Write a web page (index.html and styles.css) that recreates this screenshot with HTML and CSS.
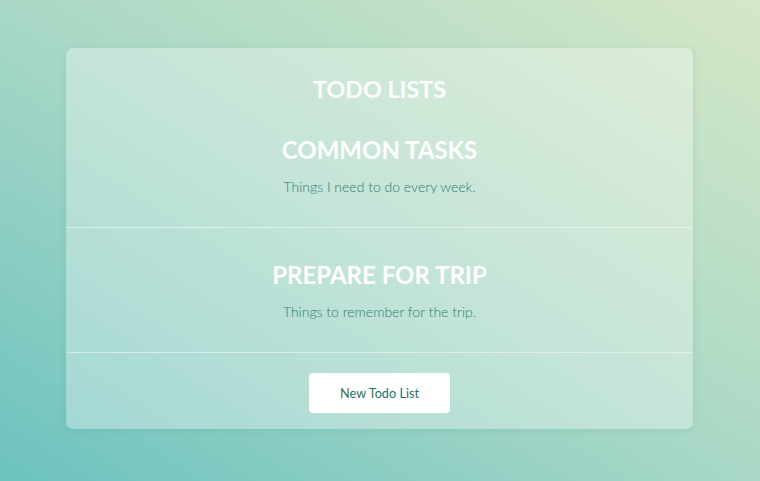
FILE: index.html
```html
<!DOCTYPE html>
<html>
<head>
<meta charset="utf-8">
<link rel="stylesheet" href="styles.css">
</head>
<body>
<main class="page">
  <section class="card">
    <h1 class="card-title">TODO LISTS</h1>
    <ul class="lists">
      <li class="list-item">
        <h2 class="list-name">COMMON TASKS</h2>
        <p class="list-desc">Things I need to do every week.</p>
      </li>
      <li class="list-item">
        <h2 class="list-name">PREPARE FOR TRIP</h2>
        <p class="list-desc">Things to remember for the trip.</p>
      </li>
    </ul>
    <div class="card-footer">
      <button class="new-btn">New Todo List</button>
    </div>
  </section>
</main>
</body>
</html>
```
FILE: styles.css
```css
* { box-sizing: border-box; }
html, body { margin: 0; height: 100%; }
body {
  font-family: Lato, "Open Sans", sans-serif;
  background: linear-gradient(to top right, #6cc2bf 0%, #a9d8c6 50%, #d5e7c6 100%);
}
.page {
  padding: 48px 0 0 66px;
}
.card {
  width: 627px;
  background: rgba(255, 255, 255, 0.32);
  border-radius: 7px;
  box-shadow: 0 1px 6px rgba(60, 130, 120, 0.15);
  padding-top: 27px;
}
.card-title {
  margin: 0;
  text-align: center;
  color: #fff;
  font-size: 23.3px;
  font-weight: 700;
  line-height: 28px;
}
.lists {
  list-style: none;
  margin: 0;
  padding: 0;
}
.list-item {
  padding: 32px 0 30px;
  text-align: center;
  border-bottom: 1px solid rgba(255, 255, 255, 0.45);
}
.list-name {
  margin: 0 0 12px;
  color: #fff;
  font-size: 24px;
  font-weight: 700;
  line-height: 30px;
}
.list-desc {
  margin: 0;
  color: #2c7c72;
  font-size: 14px;
  font-weight: 300;
  line-height: 20px;
}
.card-footer {
  display: flex;
  justify-content: center;
  padding: 20px 0 16px;
}
.new-btn {
  width: 141px;
  height: 40px;
  border: none;
  border-radius: 4px;
  background: #fff;
  color: #1f7066;
  font-family: Lato, sans-serif;
  font-size: 12.7px;
  font-weight: 400;
}
```
